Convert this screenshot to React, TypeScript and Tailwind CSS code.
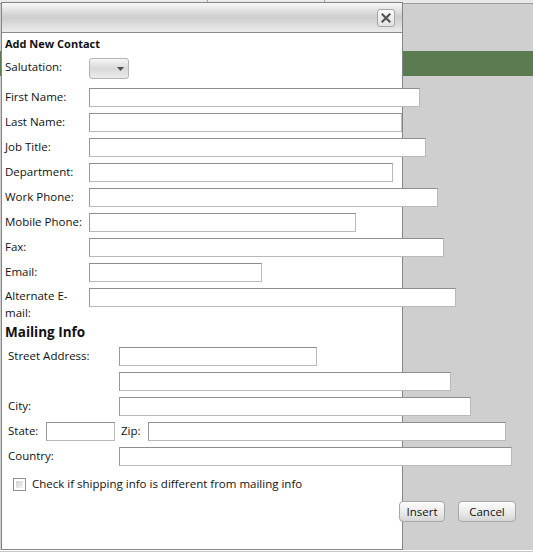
import React from 'react';

const font = { fontFamily: '"Open Sans", "Noto Sans", Arial, sans-serif' };

const inputCls =
    'h-[19px] shrink-0 bg-white border border-[#b9b9b9] border-t-[#8e8e8e] border-l-[#9a9a9a]';

const Field: React.FC<{ label: React.ReactNode; w: string }> = ({ label, w }) => (
    <div className="flex items-center h-[19px]">
        <span className="w-[84px] shrink-0 whitespace-nowrap pb-[2px]">{label}</span>
        <div className={`${inputCls} ${w}`} />
    </div>
);

const MailField: React.FC<{ label?: string; w: string }> = ({ label, w }) => (
    <div className="flex items-center h-[19px] pl-[3px]">
        <span className="w-[111px] shrink-0 whitespace-nowrap pb-[2px]">{label}</span>
        <div className={`${inputCls} ${w}`} />
    </div>
);

const ButtonChrome: React.FC<{ children: React.ReactNode; w: string }> = ({ children, w }) => (
    <button
        className={`${w} h-[21px] rounded-[4px] border border-[#a7a7a7] bg-linear-to-b from-[#fdfdfd] via-[#ececec] to-[#d6d6d6] text-[11.5px] leading-none text-[#111] shadow-[inset_0_1px_0_#fff]`}
    >
        {children}
    </button>
);

export default function App() {
    return (
        <div style={font} className="relative w-[533px] h-[552px] bg-[#cfcfcf] overflow-hidden text-[11.5px] text-[#111]">
            {/* page behind the dialog */}
            <div className="flex h-[4px] bg-[#e9e9e9] border-b border-[#9a9a9a]">
                <div className="w-[208px] border-r border-[#a0a0a0]" />
                <div className="w-[117px] border-r border-[#a0a0a0]" />
            </div>
            <div className="mt-[47px] h-[25px] bg-[#5b7c51]" />
            <div className="absolute left-0 right-0 bottom-0 h-[2px] border-t border-white bg-[#c6c6c6]" />

            {/* dialog */}
            <div className="absolute left-[1px] top-[2px] w-[402px] h-[548px] bg-white border border-[#858585] flex flex-col">
                <div className="h-[30px] shrink-0 flex items-center justify-end pr-[7px] border-b border-[#8a8a8a] bg-linear-to-b from-[#f8f8f8] via-[#cdcdcd] to-[#ececec]">
                    <button className="w-[18px] h-[18px] rounded-[3px] border border-[#a6a6a6] bg-linear-to-b from-[#fbfbfb] to-[#e2e2e2] flex items-center justify-center">
                        <svg width="10" height="10" viewBox="0 0 10 10">
                            <path d="M1.5 1.5 L8.5 8.5 M8.5 1.5 L1.5 8.5" stroke="#555" strokeWidth="2.2" strokeLinecap="square" />
                        </svg>
                    </button>
                </div>

                <div className="flex flex-col pl-[3px]">
                    <div className="mt-[3px] h-[16px] leading-[16px] font-bold text-[11px]">Add New Contact</div>

                    <div className="mt-[6px] flex items-center h-[21px]">
                        <span className="w-[84px] shrink-0 pb-[3px]">Salutation:</span>
                        <div className="relative w-[40px] h-[21px] rounded-[3px] border border-[#b4b4b4] bg-linear-to-b from-[#f6f6f6] via-[#d9d9d9] to-[#ebebeb]">
                            <svg className="absolute left-[27px] top-[8px]" width="7" height="4" viewBox="0 0 7 4">
                                <path d="M0 0 H7 L3.5 4 Z" fill="#4d4d4d" />
                            </svg>
                        </div>
                    </div>

                    <div className="mt-[9px] flex flex-col gap-[6px]">
                        <Field label="First Name:" w="w-[331px]" />
                        <Field label="Last Name:" w="w-[313px]" />
                        <Field label="Job Title:" w="w-[337px]" />
                        <Field label="Department:" w="w-[304px]" />
                        <Field label="Work Phone:" w="w-[349px]" />
                        <Field label="Mobile Phone:" w="w-[267px]" />
                        <Field label="Fax:" w="w-[355px]" />
                        <Field label="Email:" w="w-[173px]" />
                        <div className="flex items-start">
                            <span className="w-[84px] shrink-0 leading-[17px] -mt-[1px]">
                                Alternate E-
                                <br />
                                mail:
                            </span>
                            <div className={`${inputCls} w-[367px]`} />
                        </div>
                    </div>

                    <div className="mt-[2px] h-[18px] leading-[18px] text-[13.5px] font-bold">Mailing Info</div>

                    <div className="mt-[6px] flex flex-col gap-[6px]">
                        <MailField label="Street Address:" w="w-[198px]" />
                        <MailField w="w-[332px]" />
                        <MailField label="City:" w="w-[352px]" />
                        <div className="flex items-center h-[19px] pl-[3px]">
                            <span className="w-[38px] shrink-0 pb-[2px]">State:</span>
                            <div className={`${inputCls} w-[69px]`} />
                            <span className="w-[33px] shrink-0 pl-[6px] pb-[2px]">Zip:</span>
                            <div className={`${inputCls} w-[358px]`} />
                        </div>
                        <MailField label="Country:" w="w-[393px]" />
                    </div>

                    <label className="mt-[9px] flex items-center h-[18px] pl-[8px] gap-[6px]">
                        <span className="w-[13px] h-[13px] border border-[#8f8f8f] p-[2px] bg-white">
                            <span className="block w-full h-full bg-linear-to-br from-[#d2d2d2] to-[#f4f4f4]" />
                        </span>
                        <span className="whitespace-nowrap pb-[1px]">Check if shipping info is different from mailing info</span>
                    </label>

                    <div className="mt-[8px] w-[511px] flex justify-end gap-[13px]">
                        <ButtonChrome w="w-[46px]">Insert</ButtonChrome>
                        <ButtonChrome w="w-[58px]">Cancel</ButtonChrome>
                    </div>
                </div>
            </div>
        </div>
    );
}
